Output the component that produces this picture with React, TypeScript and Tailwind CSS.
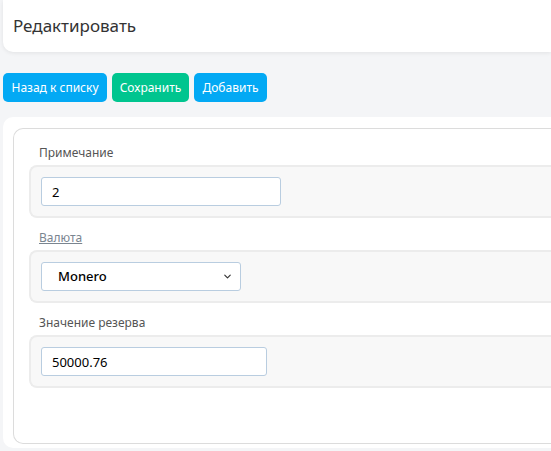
import { ChevronDown } from 'lucide-react'

const FONT = "font-['Noto_Sans','Open_Sans',sans-serif]"

function Field({
  label,
  underline,
  mt,
  children,
}: {
  label: string
  underline?: boolean
  mt: string
  children: React.ReactNode
}) {
  return (
    <div className={mt}>
      <div className={`h-[18px] pl-[10px] text-[12px] leading-[18px] ${underline ? 'text-[#7a8590] underline' : 'text-[#555]'}`}>
        {label}
      </div>
      <div className="mt-[3px] h-[53px] rounded-l-[8px] border-2 border-r-0 border-[#ececec] bg-[#f8f8f8] p-[10px]">
        {children}
      </div>
    </div>
  )
}

export default function App() {
  return (
    <div className={`h-[451px] overflow-hidden bg-[#f4f5f7] pl-[3px] ${FONT}`}>
      {/* Header */}
      <div className="flex h-[52px] items-center rounded-bl-[10px] bg-white pl-[10px] shadow-[0_1px_4px_rgba(0,0,0,0.08)]">
        <h1 className="text-[17px] text-[#333]">Редактировать</h1>
      </div>

      {/* Actions */}
      <div className="mt-[21px] flex gap-[5px]">
        <button className="h-[29px] w-[104px] rounded-[5px] bg-[#03a9f4] text-[12px] text-white">
          Назад к списку
        </button>
        <button className="h-[29px] w-[77px] rounded-[5px] bg-[#00c58f] text-[12px] text-white">
          Сохранить
        </button>
        <button className="h-[29px] w-[73px] rounded-[5px] bg-[#03a9f4] text-[12px] text-white">
          Добавить
        </button>
      </div>

      {/* Form card */}
      <div className="mt-[15px] rounded-l-[10px] bg-white pb-[4px] pl-[10px] pt-[11px]">
        <div className="h-[316px] rounded-l-[10px] border border-r-0 border-[#dcdcdc] pl-[15px] pt-[15px]">
          <Field label="Примечание" mt="mt-0">
            <input
              readOnly
              value="2"
              className="h-[29px] w-[240px] rounded-[3px] border border-[#b9cde0] bg-white px-[10px] text-[13px] text-black outline-none"
            />
          </Field>
          <Field label="Валюта" underline mt="mt-[11px]">
            <div className="flex h-[29px] w-[200px] items-center justify-between rounded-[3px] border border-[#b9cde0] bg-white pl-[16px] pr-[7px]">
              <span className="text-[13px] font-medium text-black">Monero</span>
              <ChevronDown className="h-[11px] w-[11px] text-[#333]" strokeWidth={2.5} />
            </div>
          </Field>
          <Field label="Значение резерва" mt="mt-[11px]">
            <input
              readOnly
              value="50000.76"
              className="h-[29px] w-[226px] rounded-[3px] border border-[#b9cde0] bg-white px-[10px] text-[13px] text-black outline-none"
            />
          </Field>
        </div>
      </div>
    </div>
  )
}
